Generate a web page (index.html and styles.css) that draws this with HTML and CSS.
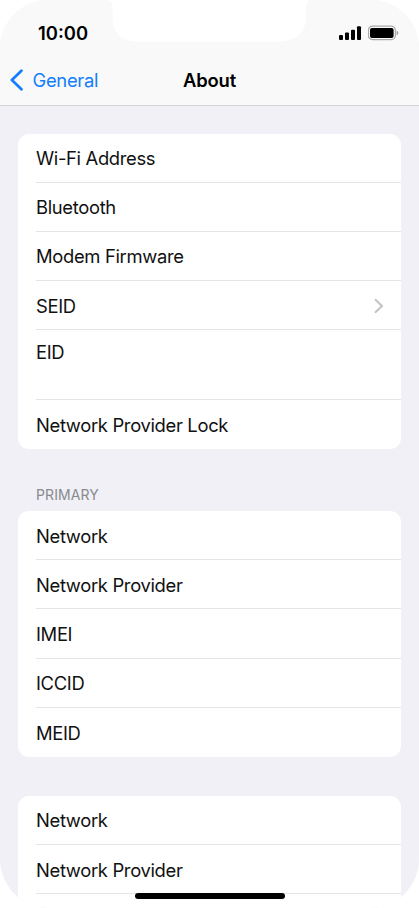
FILE: index.html
```
<!DOCTYPE html>
<html lang="en">
<head>
<meta charset="utf-8">
<title>About</title>
<link rel="stylesheet" href="styles.css">
</head>
<body>
<div class="phone">
  <header class="header">
    <svg class="notch" width="203" height="42" viewBox="0 0 203 42"><path d="M0 0C4 .5 5.500 3 5.500 7V16C5.500 32 13 41.500 31 41.500H171C190 41.500 199 32 199 16V7C199 3 200 .5 203 0Z" fill="#fff"/></svg>
    <div class="status">
      <span class="time">10:00</span>
      <div class="indicators">
        <svg width="23" height="16" viewBox="0 0 23 16"><rect x="0" y="10" width="4" height="5" rx="1.100"/><rect x="6" y="7.500" width="4" height="7.500" rx="1.100"/><rect x="12" y="4.700" width="4" height="10.300" rx="1.100"/><rect x="18" y="1.200" width="4" height="13.800" rx="1.100"/></svg>
        <svg class="battery" width="31" height="16" viewBox="0 0 31 16"><rect x=".4" y="1.200" width="27" height="13.400" rx="4.200" fill="none" stroke="#aaa" stroke-width="1.300"/><rect x="2" y="2.900" width="23.600" height="10.100" rx="2"/><path d="M28.700 5.800Q30.300 6.400 30.300 8T28.700 10.200Z" fill="#999"/></svg>
      </div>
    </div>
    <nav class="nav">
      <a class="back"><svg width="14" height="22" viewBox="0 0 14 22"><path d="M12.400 1.800 2.900 11 12.400 20.200" fill="none" stroke="#147efb" stroke-width="2.800" stroke-linecap="round" stroke-linejoin="round"/></svg><span class="back-label">General</span></a>
      <h1 class="title">About</h1>
    </nav>
  </header>
  <main class="content">
    <ul class="card">
      <li class="row"><span>Wi-Fi Address</span></li>
      <li class="row"><span>Bluetooth</span></li>
      <li class="row"><span>Modem Firmware</span></li>
      <li class="row"><span>SEID</span><svg class="chevron" width="10" height="16" viewBox="0 0 10 16"><path d="M1.700 2 8 8 1.700 14" fill="none" stroke="#c5c5c7" stroke-width="2.200" stroke-linecap="round" stroke-linejoin="round"/></svg></li>
      <li class="row tall"><span>EID</span></li>
      <li class="row"><span>Network Provider Lock</span></li>
    </ul>
    <h2 class="section">PRIMARY</h2>
    <ul class="card">
      <li class="row"><span>Network</span></li>
      <li class="row"><span>Network Provider</span></li>
      <li class="row"><span>IMEI</span></li>
      <li class="row"><span>ICCID</span></li>
      <li class="row"><span>MEID</span></li>
    </ul>
    <ul class="card last">
      <li class="row"><span>Network</span></li>
      <li class="row"><span>Network Provider</span></li>
      <li class="row"></li>
    </ul>
  </main>
  <div class="home"></div>
</div>
</body>
</html>
```
FILE: styles.css
```
* { box-sizing: border-box; }
html { background: #fff; }
body { margin: 0; font-family: Inter, sans-serif; color: #111; }
h1, h2, ul { margin: 0; padding: 0; }
.phone {
  position: relative;
  width: 419px;
  height: 908px;
  overflow: hidden;
  border-radius: 49px;
  background: #f0f0f6;
}
.header {
  position: relative;
  height: 106px;
  background: #f9f9f9;
  border-bottom: 1px solid #d4d4d9;
}
.notch { position: absolute; left: 107px; top: 0; }
.status {
  display: flex;
  justify-content: space-between;
  align-items: center;
  height: 55px;
  padding: 10px 20px 0 38px;
}
.time { font-size: 18.4px; font-weight: 600; color: #000; }
.indicators { display: flex; gap: 6px; }
.nav {
  display: grid;
  grid-template-columns: 1fr auto 1fr;
  align-items: center;
  height: 50px;
  padding: 0 9px;
}
.back { display: flex; align-items: center; gap: 9.500px; color: #147efb; font-size: 18.4px; letter-spacing: -0.3px; }
.title { font-size: 18.4px; font-weight: 600; letter-spacing: -0.15px; color: #000; }
.content { padding: 27.5px 18px 0; }
.card { list-style: none; border-radius: 11px; background: #fff; overflow: hidden; }
.row {
  display: flex;
  align-items: center;
  justify-content: space-between;
  height: 49.2px;
  margin-left: 18px;
  padding: 1px 17px 0 0;
  font-size: 18.4px;
  letter-spacing: -0.33px;
  border-bottom: 1px solid #e5e5e7;
}
.row:last-child { border-bottom: 0; }
.row.tall { height: 69.5px; align-items: flex-start; padding-top: 11px; }
.section {
  height: 62px;
  padding: 37px 18px 0;
  font-size: 14px;
  line-height: 18px;
  font-weight: 400;
  letter-spacing: 0.1px;
  color: #8a8a8e;
}
.last { margin-top: 39px; border-radius: 11px 11px 0 0; }
.home {
  position: absolute;
  left: 135px;
  top: 893px;
  width: 150px;
  height: 6px;
  border-radius: 3px;
  background: #000;
}
```
